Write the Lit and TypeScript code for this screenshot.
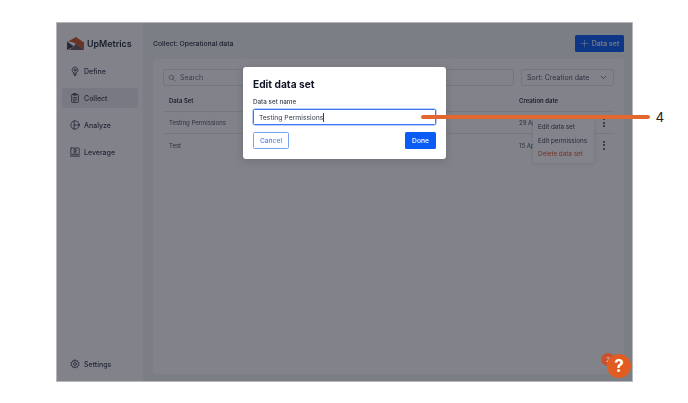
import { LitElement, html, css, svg } from "lit";
import { customElement } from "lit/decorators.js";

const icon = (body: unknown, size = 10) => html`<svg class="ic" width=${size} height=${size} viewBox="0 0 24 24" fill="none" stroke="currentColor" stroke-width="2" stroke-linecap="round" stroke-linejoin="round">${body}</svg>`;

const icons = {
  define: svg`<path d="M8 15.500a7 7 0 1 1 8 0V17H8z"/><path d="M9 20h6M10.500 23h3"/><circle cx="12" cy="10" r="2.500"/>`,
  collect: svg`<rect x="4" y="3.500" width="16" height="19" rx="1.500"/><rect x="8.500" y="1.500" width="7" height="4" rx="1"/><path d="M8 11h8M8 15h8M8 19h5"/>`,
  analyze: svg`<circle cx="12" cy="12" r="10"/><path d="M10 2.500V21.500M10 12h11.500"/>`,
  leverage: svg`<rect x="2" y="2.500" width="20" height="16" rx="1"/><circle cx="12" cy="8.500" r="3"/><path d="M7 15.500c1-2.500 9-2.500 10 0M1 22h22"/>`,
  settings: svg`<circle cx="12" cy="12" r="3.500"/><path d="M12 2l2 3 3.500-1 1 3.500L22 9l-1.500 3 1.500 3-3.500 1.500-1 3.500-3.500-1-2 3-2-3-3.500 1-1-3.500L2 15l1.500-3L2 9l3.500-1.500 1-3.500L10 5z"/>`,
};

@customElement("app-root")
export class AppRoot extends LitElement {
  static styles = css`
    :host { display: block; width: 688px; height: 403px; position: relative; overflow: hidden; background: #fff; font-family: Inter, "Liberation Sans", sans-serif; color: #1f2937; }
    .frame { position: absolute; left: 56px; top: 22px; width: 577px; height: 360px; display: flex; overflow: hidden; background: #f1f2f4; box-sizing: border-box; border: 1px solid #b5b7bc; filter: blur(.3px); }
    .side { width: 86px; flex: none; background: #fbfbfc; display: flex; flex-direction: column; padding: 13px 5px 0; box-sizing: border-box; }
    .logo { display: flex; align-items: center; gap: 3px; height: 14px; margin: 0 0 11px 5px; font-size: 8.900px; font-weight: 600; color: #1f2937; }
    .nav { display: flex; flex-direction: column; gap: 7px; flex: 1; }
    .item { height: 20px; display: flex; align-items: center; gap: 4px; padding-left: 8px; font-size: 7px; font-weight: 500; color: #374151; border-radius: 3px; }
    .item.on { background: #e8e9ec; }
    .settings { margin-bottom: 7px; }
    .main { flex: 1; min-width: 0; display: flex; flex-direction: column; padding: 0 8px 7px 10px; }
    .top { height: 36px; padding-top: 4px; box-sizing: border-box; display: flex; align-items: center; justify-content: space-between; font-size: 6.800px; font-weight: 500; flex: none; }
    .add { width: 49px; height: 17px; background: #0a5cf5; color: #e5edff; border-radius: 1.500px; display: flex; align-items: center; justify-content: center; gap: 3px; font-size: 7px; font-weight: 500; }
    .card { flex: 1; background: #fcfcfd; border-radius: 4px; padding: 10px; }
    .filters { display: flex; gap: 7px; }
    .search { flex: 1; height: 17px; border: 1px solid #dfe1e6; border-radius: 2px; display: flex; align-items: center; gap: 4px; padding-left: 4px; font-size: 7px; color: #6b7280; box-sizing: border-box; }
    .sort { width: 93px; flex: none; height: 17px; border: 1px solid #dfe1e6; border-radius: 2px; display: flex; align-items: center; justify-content: space-between; padding: 0 5px; box-sizing: border-box; font-size: 7px; color: #4b5563; }
    .row { display: grid; grid-template-columns: 350px 1fr 20px; align-items: center; height: 22px; padding-left: 6px; border-bottom: 1px solid #e3e5e9; font-size: 6px; color: #4b5563; box-sizing: border-box; }
    .row.head { height: 26px; font-weight: 600; color: #1f2937; padding-top: 4px; }
    .row.last { border-bottom: none; }
    .dots { display: flex; flex-direction: column; gap: 1.500px; align-items: center; }
    .dots i { width: 2px; height: 2px; background: #374151; border-radius: 50%; }
    .menu { position: absolute; left: 476px; top: 94px; width: 61px; height: 46px; background: #fff; border-radius: 3px; box-shadow: 0 1px 5px rgba(0,0,0,.12); font-size: 6.300px; line-height: 8px; color: #374151; display: flex; flex-direction: column; gap: 5.500px; padding: 6px 5px 0; box-sizing: border-box; white-space: nowrap; }
    .menu .del { color: #d9532c; }
    .scrim { position: absolute; inset: 0; background: rgba(18,20,32,.52); }
    .modal { position: absolute; left: 243px; top: 67px; width: 203px; height: 92px; background: #fff; border-radius: 3px; box-sizing: border-box; padding: 10px; display: flex; flex-direction: column; box-shadow: 0 2px 8px rgba(0,0,0,.15); filter: blur(.25px); }
    h2 { margin: 0; font-size: 10.200px; font-weight: 700; color: #111827; line-height: 14px; }
    label { font-size: 6.300px; font-weight: 500; color: #374151; margin-top: 7px; line-height: 9px; }
    .input { height: 18px; border: 1px solid #3b78f2; box-shadow: 0 0 0 .5px #7aa3f5; border-radius: 1.500px; margin-top: 2px; display: flex; align-items: center; padding-left: 5px; font-size: 6.800px; color: #374151; }
    .caret { width: 1px; height: 9px; background: #374151; }
    .btns { display: flex; justify-content: space-between; margin-top: 7px; }
    .btn { height: 17px; border-radius: 1.500px; display: flex; align-items: center; justify-content: center; font-size: 6.700px; font-weight: 500; box-sizing: border-box; }
    .cancel { width: 36px; border: 1px solid #7ba3f5; color: #4d84f3; }
    .done { width: 31px; background: #0a5cf5; color: #fff; }
    .line { position: absolute; left: 421px; top: 115px; width: 229px; height: 3.500px; border-radius: 2px; background: #e3682f; }
    .num { position: absolute; left: 656px; top: 109px; font-size: 14px; font-family: "Liberation Sans", sans-serif; color: #222; line-height: 16px; }
    .help { position: absolute; left: 607px; top: 354px; width: 24px; height: 24px; border-radius: 50%; background: #e15c20; color: #fff; font-size: 17px; font-weight: 700; display: flex; align-items: center; justify-content: center; }
    .badge { position: absolute; left: 601px; top: 353px; width: 14px; height: 13px; border-radius: 50%; background: #c9522a; color: #f3d9cc; font-size: 6px; display: flex; align-items: center; justify-content: center; }
    .ic { flex: none; display: block; }
  `;

  render() {
    return html`
      <div class="frame">
        <aside class="side">
          <div class="logo">
            <svg width="17" height="13" viewBox="0 0 17 13"><path d="M1 4.500 9 0l8 5.500V13L8.500 6.500 5 5z" fill="#c9582a"/><path d="M0 4.500l7 5L0 13z" fill="#3f4250"/><path d="M7 9.500 8.500 6.500 17 13H2z" fill="#6c5a58"/></svg>
            UpMetrics
          </div>
          <nav class="nav">
            <div class="item">${icon(icons.define)}Define</div>
            <div class="item on">${icon(icons.collect)}Collect</div>
            <div class="item">${icon(icons.analyze)}Analyze</div>
            <div class="item">${icon(icons.leverage)}Leverage</div>
          </nav>
          <div class="item settings">${icon(icons.settings)}Settings</div>
        </aside>
        <div class="main">
          <header class="top">
            <span>Collect: Operational data</span>
            <div class="add">${icon(svg`<path d="M12 3v18M3 12h18" stroke-width="1.500"/>`, 9)}Data set</div>
          </header>
          <section class="card">
            <div class="filters">
              <div class="search">${icon(svg`<circle cx="10" cy="10" r="6.500"/><path d="M15 15l6 6"/>`, 8)}Search</div>
              <div class="sort">Sort: Creation date ${icon(svg`<path d="M6 9l6 6 6-6"/>`, 9)}</div>
            </div>
            <div class="row head"><span>Data Set</span><span>Creation date</span><span></span></div>
            <div class="row"><span>Testing Permissions</span><span>29 Apr 2022</span><span class="dots"><i></i><i></i><i></i></span></div>
            <div class="row last"><span>Test</span><span>15 Apr 2022</span><span class="dots"><i></i><i></i><i></i></span></div>
          </section>
        </div>
        <div class="menu"><span>Edit data set</span><span>Edit permissions</span><span class="del">Delete data set</span></div>
        <div class="scrim"></div>
      </div>
      <div class="modal">
        <h2>Edit data set</h2>
        <label>Data set name</label>
        <div class="input">Testing Permissions<span class="caret"></span></div>
        <div class="btns"><div class="btn cancel">Cancel</div><div class="btn done">Done</div></div>
      </div>
      <div class="line"></div>
      <div class="num">4</div>
      <div class="badge">2</div>
      <div class="help">?</div>
    `;
  }
}
